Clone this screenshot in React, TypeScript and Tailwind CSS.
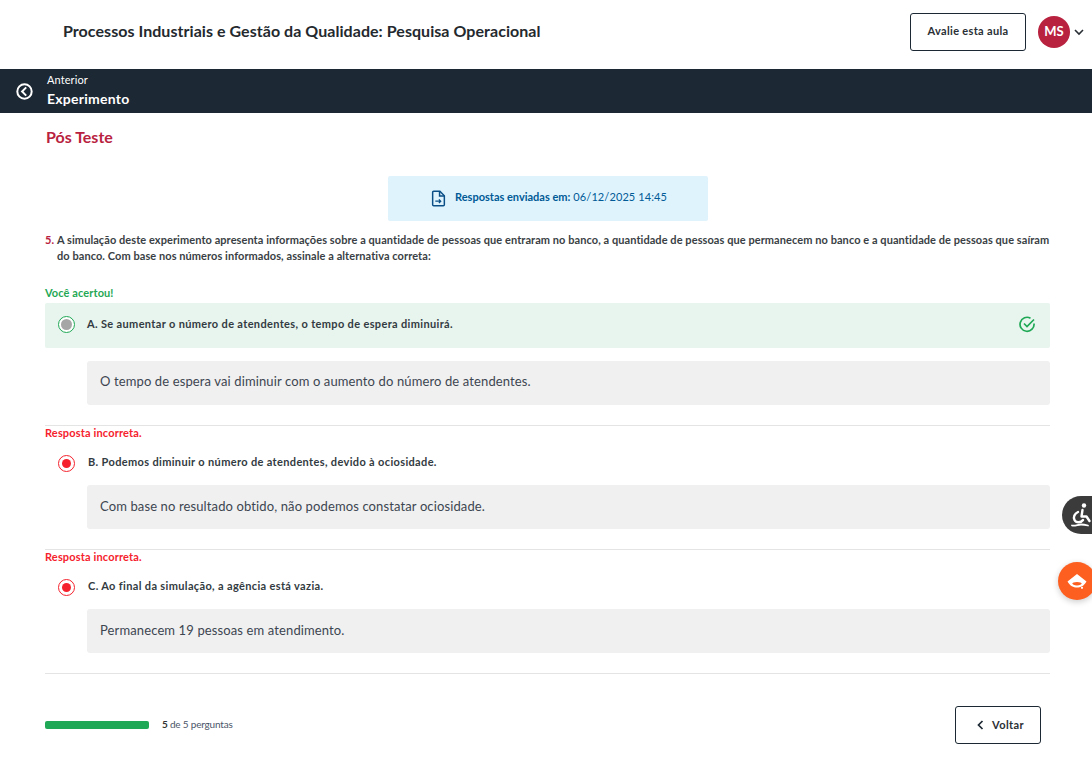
import React from "react";

const font = { fontFamily: '"Lato", "Liberation Sans", sans-serif' };

function Radio({ kind }: { kind: "green" | "red" }) {
  return kind === "green" ? (
    <span className="flex h-[17px] w-[17px] shrink-0 items-center justify-center rounded-full border border-[#1fa855] bg-white">
      <span className="h-[11px] w-[11px] rounded-full bg-[#a6a6a6]" />
    </span>
  ) : (
    <span className="flex h-[17px] w-[17px] shrink-0 items-center justify-center rounded-full border border-[#f5222d] bg-white">
      <span className="h-[9px] w-[9px] rounded-full bg-[#f5222d]" />
    </span>
  );
}

function Option({ label, feedback }: { label: string; feedback: string }) {
  return (
    <div className="border-b border-[#e4e4e4] pb-[20px]">
      <div className="h-[16px] text-[11px] font-bold leading-[14px] tracking-[0.15px] text-[#f5222d]">Resposta incorreta.</div>
      <div className="flex h-[43px] items-center pl-[13px]">
        <Radio kind="red" />
        <span className="ml-[13px] pb-[2px] text-[11px] font-bold tracking-[0.35px] text-[#333b42]">{label}</span>
      </div>
      <div className="ml-[42px] flex h-[44px] items-center rounded-[3px] bg-[#f0f0f0] px-[13px] pb-[1px] text-[13px] tracking-[0.12px] text-[#3d4650]">
        {feedback}
      </div>
    </div>
  );
}

export default function App() {
  return (
    <div style={font} className="relative h-[764px] w-[1092px] overflow-hidden bg-white">
      <header className="flex h-[69px] items-start pl-[63px] pr-[7px]">
        <h1 className="flex-1 pt-[20px] text-[16px] font-bold leading-[22px] tracking-[0.05px] text-[#24292e]">
          Processos Industriais e Gestão da Qualidade: Pesquisa Operacional
        </h1>
        <button className="mt-[13px] h-[38px] w-[116px] rounded-[3px] border border-[#1c2833] pb-[2px] text-[11px] font-bold tracking-[0.32px] text-[#2a2f35]">
          Avalie esta aula
        </button>
        <span className="ml-[12px] mt-[16px] flex h-[32px] w-[32px] items-center justify-center rounded-full bg-[#b9223f] pb-[1px] text-[13px] font-bold text-white">
          MS
        </span>
        <svg className="ml-[3px] mt-[26px]" width="12" height="12" viewBox="0 0 12 12" fill="none" stroke="#2a2f35" strokeWidth="1.6">
          <path d="M2 4l4 4 4-4" />
        </svg>
      </header>

      <nav className="flex h-[44px] items-center bg-[#1c2833] pl-[16px] text-white">
        <svg width="17" height="17" viewBox="0 0 17 17" fill="none" stroke="white" strokeWidth="2">
          <circle cx="8.5" cy="8.5" r="7.2" />
          <path d="M10.2 4.400L6.100 8.500l4.100 4.100" />
        </svg>
        <div className="ml-[14px]">
          <div className="text-[11px] leading-[14px] tracking-[0.1px]">Anterior</div>
          <div className="mt-[2px] text-[14px] font-bold leading-[20px] tracking-[0.25px]">Experimento</div>
        </div>
      </nav>

      <main className="pl-[45px] pr-[42px]">
        <h2 className="ml-[1px] pt-[13px] text-[16px] font-bold leading-[21px] text-[#b9223f]">Pós Teste</h2>

        <div className="mt-[29px] ml-[343px] flex h-[45px] w-[320px] items-center justify-center rounded-[2px] bg-[#dff3fd] pb-[2px] pl-[2px] text-[11px] text-[#005a96]">
          <svg className="mt-[2px]" width="15" height="17" viewBox="0 0 14 16" fill="none" stroke="#0b4f86" strokeWidth="1.4">
            <path d="M1.500 2.200c0-.6.4-1 1-1h5.800l4.200 4.200v8.400c0 .6-.4 1-1 1h-9c-.6 0-1-.4-1-1z" />
            <path d="M8 1.200v4.400h4.500" />
            <path d="M4 10.500h5M7.400 8.800l1.700 1.700-1.700 1.700" strokeWidth="1.2" />
          </svg>
          <span className="ml-[9px] font-bold">Respostas enviadas em:</span>
          <span className="ml-[3px] tracking-[0.1px]">06/12/2025 14:45</span>
        </div>

        <div className="mt-[11px] flex text-[11px] font-bold leading-[16px] tracking-[0.07px] text-[#3a3f45]">
          <span className="w-[12px] shrink-0 text-[#b9223f]">5.</span>
          <p>
            A simulação deste experimento apresenta informações sobre a quantidade de pessoas que entraram no banco, a
            quantidade de pessoas que permanecem no banco e a quantidade de pessoas que saíram do banco. Com base nos
            números informados, assinale a alternativa correta:
          </p>
        </div>

        <div className="mt-[21px] h-[16px] text-[11px] font-bold leading-[16px] tracking-[0.1px] text-[#1fa855]">Você acertou!</div>
        <div className="mt-[2px] flex h-[45px] items-center rounded-[2px] bg-[#e8f5ee] pb-[2px] pl-[13px] pr-[14px]">
          <Radio kind="green" />
          <span className="ml-[12px] flex-1 text-[11px] font-bold tracking-[0.35px] text-[#333b42]">
            A. Se aumentar o número de atendentes, o tempo de espera diminuirá.
          </span>
          <svg width="17" height="17" viewBox="0 0 17 17" fill="none" stroke="#1fa855" strokeWidth="1.7">
            <path d="M15 7.500A7 7 0 1 1 11.500 2.200" />
            <path d="M5 7.500l3 3 7-7" />
          </svg>
        </div>
        <div className="mt-[13px] ml-[42px] flex h-[44px] items-center rounded-[3px] bg-[#f0f0f0] px-[13px] pb-[3px] text-[13px] tracking-[0.12px] text-[#3d4650]">
          O tempo de espera vai diminuir com o aumento do número de atendentes.
        </div>
        <div className="mt-[20px] border-t border-[#e4e4e4]" />

        <Option
          label="B. Podemos diminuir o número de atendentes, devido à ociosidade."
          feedback="Com base no resultado obtido, não podemos constatar ociosidade."
        />
        <Option
          label="C. Ao final da simulação, a agência está vazia."
          feedback="Permanecem 19 pessoas em atendimento."
        />

        <div className="mt-[32px] flex items-center pr-[9px]">
          <div className="h-[8px] w-[104px] rounded-[2px] bg-[#1fa855]" />
          <span className="ml-[13px] flex-1 pb-[1px] text-[10px] tracking-[-0.2px] text-[#4a5568]">
            <b className="text-[#333]">5</b> de 5 perguntas
          </span>
          <button className="flex h-[38px] w-[86px] items-center justify-center rounded-[3px] border border-[#1c2833] pl-[4px] text-[11px] font-bold tracking-[0.4px] text-[#2a2f35]">
            <svg className="mr-[7px]" width="9" height="10" viewBox="0 0 9 10" fill="none" stroke="#1c2833" strokeWidth="1.7">
              <path d="M6.500 1L2.500 5l4 4" />
            </svg>
            Voltar
          </button>
        </div>
      </main>

      <div className="absolute left-[1062px] top-[496px] flex h-[38px] w-[40px] items-center rounded-l-[19px] bg-[#3b3b3b] pl-[8px]">
        <svg width="22" height="26" viewBox="0 0 22 26" fill="none" stroke="white" strokeWidth="2.400" strokeLinecap="round" strokeLinejoin="round">
          <circle cx="14" cy="3.500" r="2.200" fill="white" stroke="none" />
          <path d="M12.500 8l-1 6.500h5l3 4.500" />
          <path d="M8 10c-3.500 1.500-5 5-3.500 8s6.500 3 8.500 0" />
          <path d="M2 23.500c3 .8 6-1 9-1s5 .5 7 1" strokeWidth="1.800" />
        </svg>
      </div>
      <div className="absolute left-[1058px] top-[562px] flex h-[38px] w-[38px] items-center justify-center rounded-full bg-[#fc5f1f] shadow-[0_2px_6px_rgba(0,0,0,0.2)]">
        <svg width="20" height="17" viewBox="0 0 20 17">
          <path
            fillRule="evenodd"
            d="M10 1L19.500 8.500C17 13 13.500 14.500 10 14.500S3 13 .5 8.500zM10 9c-2.800 0-4.700.8-4.700 1.600S7.200 12.400 10 12.400s4.700-1 4.700-1.800S12.800 9 10 9z"
            fill="white"
          />
          <circle cx="15" cy="14.800" r="1.100" fill="white" />
        </svg>
      </div>
    </div>
  );
}
